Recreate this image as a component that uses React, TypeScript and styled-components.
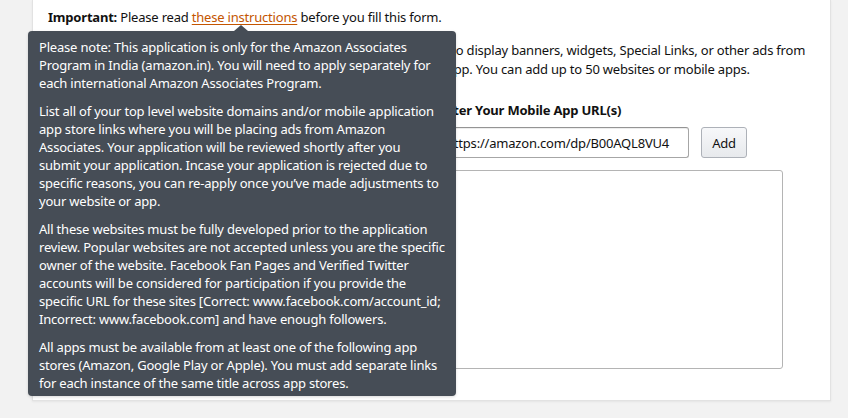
import React from "react";
import styled, { createGlobalStyle } from "styled-components";

const GlobalStyle = createGlobalStyle`
  html, body {
    margin: 0;
    padding: 0;
    background: #f2f2f2;
  }
  body {
    font-family: "Noto Sans", "Open Sans", sans-serif;
    font-size: 13px;
    letter-spacing: -0.2px;
    color: #111;
  }
`;

const Page = styled.div`
  width: 848px;
  height: 418px;
  overflow: hidden;
  padding-left: 32px;
  box-sizing: border-box;
`;

const Card = styled.div`
  position: relative;
  width: 799px;
  height: 401px;
  box-sizing: border-box;
  background: #fff;
  border: 1px solid #e2e2e2;
  border-top: none;
  box-shadow: 0 1px 2px rgba(0, 0, 0, 0.06);
  padding: 8px 16px 0 15px;
`;

const Notice = styled.div`
  line-height: 19px;
  height: 19px;
`;

const Strong = styled.b`
  font-weight: 700;
`;

const Link = styled.a`
  color: #c45500;
  text-decoration: underline;
  text-underline-offset: 2px;
  cursor: pointer;
`;

const Intro = styled.p`
  margin: 14px 0 0;
  line-height: 19px;
  white-space: nowrap;
`;

const Columns = styled.div`
  display: grid;
  grid-template-columns: 350px 345px;
  column-gap: 40px;
  margin-top: 22px;
`;

const Column = styled.div`
  display: flex;
  flex-direction: column;
`;

const Label = styled.label`
  font-weight: 700;
  line-height: 19px;
  margin-bottom: 7px;
`;

const InputRow = styled.div`
  display: flex;
  align-items: center;
  gap: 12px;
`;

const UrlInput = styled.input`
  flex: 0 0 251px;
  height: 31px;
  box-sizing: border-box;
  border: 1px solid #a6a6a6;
  border-top-color: #949494;
  border-radius: 3px;
  padding: 0 7px;
  font: inherit;
  letter-spacing: -0.2px;
  color: #111;
  box-shadow: 0 1px 0 rgba(0, 0, 0, 0.07) inset;
  outline: none;
`;

const AddButton = styled.button`
  width: 46px;
  height: 31px;
  box-sizing: border-box;
  border: 1px solid #adb1b8;
  border-radius: 3px;
  background: linear-gradient(to bottom, #f7f8fa, #e7e9ec);
  font: inherit;
  letter-spacing: -0.2px;
  color: #111;
  padding: 0;
  cursor: pointer;
`;

const UrlList = styled.div`
  margin-top: 12px;
  width: 345px;
  height: 199px;
  box-sizing: border-box;
  border: 1px solid #b4b4b4;
  border-radius: 3px;
  background: #fff;
`;

const Tooltip = styled.div`
  position: absolute;
  left: -5px;
  top: 31px;
  width: 428px;
  box-sizing: border-box;
  padding: 7px 11px 4px;
  background: #464d56;
  color: #fff;
  border-radius: 4px;
  line-height: 18px;
  z-index: 5;
  box-shadow: 0 1px 3px rgba(0, 0, 0, 0.15);

  &::before {
    content: "";
    position: absolute;
    top: -6px;
    left: 206px;
    border-left: 7px solid transparent;
    border-right: 7px solid transparent;
    border-bottom: 6px solid #464d56;
  }
`;

const TipPara = styled.p`
  margin: 0 0 10px;
  white-space: nowrap;
  &:last-child {
    margin-bottom: 0;
  }
`;

const tipParagraphs: string[][] = [
  [
    "Please note: This application is only for the Amazon Associates",
    "Program in India (amazon.in). You will need to apply separately for",
    "each international Amazon Associates Program.",
  ],
  [
    "List all of your top level website domains and/or mobile application",
    "app store links where you will be placing ads from Amazon",
    "Associates. Your application will be reviewed shortly after you",
    "submit your application. Incase your application is rejected due to",
    "specific reasons, you can re-apply once you’ve made adjustments to",
    "your website or app.",
  ],
  [
    "All these websites must be fully developed prior to the application",
    "review. Popular websites are not accepted unless you are the specific",
    "owner of the website. Facebook Fan Pages and Verified Twitter",
    "accounts will be considered for participation if you provide the",
    "specific URL for these sites [Correct: www.facebook.com/account_id;",
    "Incorrect: www.facebook.com] and have enough followers.",
  ],
  [
    "All apps must be available from at least one of the following app",
    "stores (Amazon, Google Play or Apple). You must add separate links",
    "for each instance of the same title across app stores.",
  ],
];

export default function App() {
  return (
    <>
      <GlobalStyle />
      <Page>
        <Card>
          <Notice>
            <Strong>Important:</Strong> Please read <Link>these instructions</Link> before you fill this form.
          </Notice>
          <Intro>
            List the websites and mobile apps, where you’ll use Associates’ tools to display banners, widgets, Special Links, or other ads from
            <br />
            Amazon. Please enter each website you own as well as your mobile app. You can add up to 50 websites or mobile apps.
          </Intro>
          <Columns>
            <Column>
              <Label>Enter Your Website(s)</Label>
              <InputRow>
                <UrlInput defaultValue="" placeholder="http://www.example.com" />
                <AddButton>Add</AddButton>
              </InputRow>
              <UrlList />
            </Column>
            <Column>
              <Label>Enter Your Mobile App URL(s)</Label>
              <InputRow>
                <UrlInput defaultValue="https://amazon.com/dp/B00AQL8VU4" />
                <AddButton>Add</AddButton>
              </InputRow>
              <UrlList />
            </Column>
          </Columns>
          <Tooltip>
            {tipParagraphs.map((lines, i) => (
              <TipPara key={i}>
                {lines.map((line, j) => (
                  <React.Fragment key={j}>
                    {line}
                    {j < lines.length - 1 && <br />}
                  </React.Fragment>
                ))}
              </TipPara>
            ))}
          </Tooltip>
        </Card>
      </Page>
    </>
  );
}
